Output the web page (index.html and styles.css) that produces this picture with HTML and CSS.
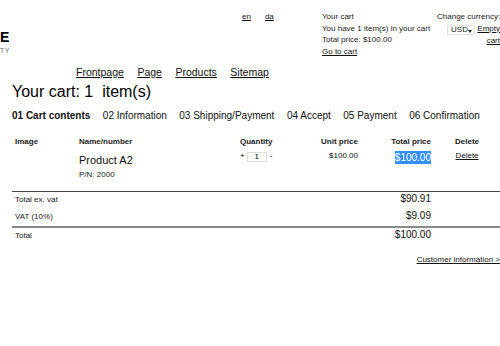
FILE: index.html
```html
<!DOCTYPE html>
<html lang="en">

<head>
  <meta charset="UTF-8" />
  <meta name="viewport" content="width=device-width, initial-scale=1.0" />
  <title>Your cart</title>
  <link rel="stylesheet" href="styles.css">
</head>

<body>
  <div id="page">
    <div class="top">
      <div class="logo">
        <div class="logo-name">E</div>
        <div class="logo-sub">TY</div>
      </div>
      <div class="lang">
        <a href="#">en</a>
        <a href="#">da</a>
      </div>
      <div class="minicart">
        <div>Your cart</div>
        <div>You have 1 item(s) in your cart</div>
        <div>Total price: $100.00</div>
        <a href="#">Go to cart</a>
      </div>
      <div class="currency">
        <div class="cur-label">Change currency:</div>
        <div class="cur-row"><span class="select">USD</span> <a href="#">Empty cart</a></div>
      </div>
    </div>

    <div class="menu">
      <a href="#">Frontpage</a>
      <a href="#">Page</a>
      <a href="#">Products</a>
      <a href="#">Sitemap</a>
    </div>

    <h1>Your cart: 1&nbsp; item(s)</h1>

    <div class="steps">
      <span class="active">01 Cart contents</span>
      <span>02 Information</span>
      <span>03 Shipping/Payment</span>
      <span>04 Accept</span>
      <span>05 Payment</span>
      <span>06 Confirmation</span>
    </div>

    <table class="cart">
      <colgroup>
        <col style="width: 64px">
        <col style="width: 161px">
        <col style="width: 63px">
        <col style="width: 61px">
        <col style="width: 73px">
        <col style="width: 66px">
      </colgroup>
      <thead>
        <tr>
          <th>Image</th>
          <th>Name/number</th>
          <th>Quantity</th>
          <th class="num">Unit price</th>
          <th class="num">Total price</th>
          <th class="mid">Delete</th>
        </tr>
      </thead>
      <tbody class="items">
        <tr>
          <td></td>
          <td>
            <div class="prod-name">Product A2</div>
            <div class="prod-pn">P/N: 2000</div>
          </td>
          <td class="qty">+<input type="text" value="1" />-</td>
          <td class="num">$100.00</td>
          <td class="num"><span class="picked">$100.00</span></td>
          <td class="mid"><a href="#">Delete</a></td>
        </tr>
      </tbody>
      <tbody class="sums">
        <tr class="first">
          <td colspan="4">Total ex. vat</td>
          <td class="num amount">$90.91</td>
          <td></td>
        </tr>
        <tr>
          <td colspan="4">VAT (10%)</td>
          <td class="num amount">$9.09</td>
          <td></td>
        </tr>
        <tr class="grand">
          <td colspan="4">Total</td>
          <td class="num amount">$100.00</td>
          <td></td>
        </tr>
      </tbody>
    </table>

    <div class="next">
      <a href="#">Customer information &gt;</a>
    </div>
  </div>
</body>

</html>
```

FILE: styles.css
```css
body {
  margin: 0;
  width: 500px;
  overflow: hidden;
  font-family: "Liberation Sans", Arial, sans-serif;
  color: #111;
  background-color: #fff;
}

a {
  color: #111;
}

.top {
  display: flex;
  box-sizing: border-box;
  height: 66px;
  padding-top: 11px;
  font-size: 8px;
  line-height: 11.5px;
}

.logo {
  width: 242px;
}

.logo-name {
  margin-top: 19px;
  font-size: 14px;
  line-height: 14px;
  font-weight: bold;
  color: #000;
}

.logo-sub {
  margin-top: 3px;
  font-size: 6.5px;
  line-height: 8px;
  letter-spacing: 1px;
  color: #666;
}

.lang {
  display: flex;
  gap: 14px;
  width: 80px;
  align-items: flex-start;
}

.minicart {
  width: 115px;
  color: #222;
}

.currency {
  width: 63px;
  color: #222;
}

.cur-label {
  white-space: nowrap;
}

.cur-row {
  text-align: right;
}

.select {
  display: inline-block;
  box-sizing: border-box;
  width: 28px;
  height: 10px;
  padding-left: 3px;
  border: 1px solid #e2e2e2;
  line-height: 8px;
  text-align: left;
  vertical-align: -1px;
  position: relative;
}

.select::after {
  content: "";
  position: absolute;
  right: 2px;
  top: 4px;
  border-left: 2.5px solid transparent;
  border-right: 2.5px solid transparent;
  border-top: 3px solid #222;
}

.menu {
  display: flex;
  gap: 13.5px;
  padding-left: 76px;
  font-size: 10.5px;
  line-height: 12px;
}

h1 {
  margin: 5px 0 0 12px;
  font-size: 16px;
  line-height: 18px;
  font-weight: normal;
  color: #000;
}

.steps {
  display: flex;
  gap: 12.5px;
  margin-top: 9px;
  padding-left: 12px;
  font-size: 10px;
  line-height: 12px;
  white-space: nowrap;
}

.steps .active {
  font-weight: bold;
}

.cart {
  table-layout: fixed;
  width: 488px;
  margin: 15px 0 0 12px;
  border-collapse: collapse;
  font-size: 8px;
}

.cart th {
  padding: 0 3px;
  line-height: 10px;
  text-align: left;
  color: #222;
}

.cart .num {
  text-align: right;
}

.cart .mid {
  text-align: center;
}

.items td {
  padding: 4px 3px 11px;
  line-height: 10px;
  vertical-align: top;
}

.prod-name {
  margin-top: 2.5px;
  font-size: 11px;
  line-height: 13px;
}

.prod-pn {
  margin-top: 3.5px;
  color: #222;
}

.qty input {
  box-sizing: border-box;
  width: 20px;
  height: 10px;
  margin: 0 3px 0 2px;
  padding: 0;
  border: 1px solid #ddd;
  font-family: inherit;
  font-size: 8px;
  text-align: center;
  vertical-align: -1px;
}

.picked {
  display: inline-block;
  font-size: 10px;
  line-height: 13px;
  background-color: #338fff;
  color: #fff;
}

.sums td {
  padding: 1px 3px 3px;
  line-height: 12px;
  vertical-align: baseline;
  color: #222;
}

.sums .first td {
  border-top: 1px solid #444;
}

.sums .grand td {
  border-top: 2px solid #8a8a8a;
}

.sums .amount {
  font-size: 10px;
  color: #111;
}

.next {
  margin-top: 10px;
  font-size: 8px;
  line-height: 10px;
  text-align: right;
}
```
